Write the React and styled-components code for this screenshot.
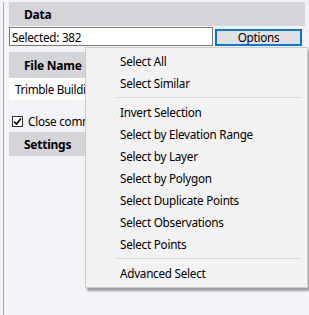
import React from 'react';
import styled, { createGlobalStyle } from 'styled-components';

const GlobalStyle = createGlobalStyle`
    html, body {
        margin: 0;
        padding: 0;
        background: #f3f3f7;
        font-family: "Segoe UI", "Noto Sans", "Liberation Sans", sans-serif;
        font-size: 11.7px;
        letter-spacing: -0.25px;
        color: #000;
    }
`;

const Page = styled.div`
    position: relative;
    width: 309px;
    height: 315px;
    overflow: hidden;
    box-sizing: border-box;
    padding: 2px 4px 0 3px;
`;

const Panel = styled.div`
    height: 100%;
    border-left: 1px solid #a9a9ae;
    padding-left: 5px;
    display: flex;
    flex-direction: column;
`;

const Header = styled.div`
    height: ${(p) => p.h || 24}px;
    background: #d4d4d9;
    font-weight: 700;
    font-size: 12px;
    display: flex;
    align-items: center;
    padding-left: 15px;
    margin-top: ${(p) => p.mt || 0}px;
`;

const Row = styled.div`
    display: flex;
    align-items: center;
    gap: 2px;
    margin-top: 1px;
`;

const TextBox = styled.div`
    width: 204px;
    height: 19px;
    box-sizing: border-box;
    border: 1px solid #7a7a7a;
    background: #fff;
    padding-left: 2px;
    display: flex;
    align-items: center;
    white-space: nowrap;
    overflow: hidden;
`;

const Button = styled.button`
    width: 87px;
    height: 17px;
    margin-top: 1px;
    box-sizing: border-box;
    border: 2px solid #0078d7;
    background: #e1e1e1;
    font-family: inherit;
    font-size: 11.7px;
    letter-spacing: -0.25px;
    padding: 0;
    line-height: 12px;
`;

const FileBox = styled.div`
    height: 22px;
    background: #fff;
    padding-left: 6px;
    display: flex;
    align-items: center;
    white-space: nowrap;
    letter-spacing: -0.35px;
`;

const CheckRow = styled.label`
    display: flex;
    align-items: center;
    gap: 5px;
    height: 20px;
    margin-top: 11px;
    padding-left: 3px;
    white-space: nowrap;
`;

const Box = styled.span`
    width: 11px;
    height: 11px;
    flex: none;
    box-sizing: border-box;
    border: 1px solid #333;
    background: #fff;
    display: flex;
    align-items: center;
    justify-content: center;
`;

const Menu = styled.div`
    position: absolute;
    left: 85px;
    top: 47px;
    width: 223px;
    box-sizing: border-box;
    background: #f2f2f2;
    border: 1px solid #cccccc;
    box-shadow: 2px 3px 2px rgba(0, 0, 0, 0.35);
    padding: 2px 0 3px;
`;

const Item = styled.div`
    height: 22px;
    display: flex;
    align-items: center;
    padding-left: 34px;
    white-space: nowrap;
`;

const Sep = styled.div`
    height: 1px;
    background: #d7d7d7;
    margin: 3px 6px 3px 30px;
`;

const menu = [
    'Select All',
    'Select Similar',
    '-',
    'Invert Selection',
    'Select by Elevation Range',
    'Select by Layer',
    'Select by Polygon',
    'Select Duplicate Points',
    'Select Observations',
    'Select Points',
    '-',
    'Advanced Select',
];

const App = () => {
    return (
        <>
            <GlobalStyle />
            <Page>
                <Panel>
                    <Header>Data</Header>
                    <Row>
                        <TextBox>Selected: 382</TextBox>
                        <Button>Options</Button>
                    </Row>
                    <Header h={26} mt={6}>File Name</Header>
                    <FileBox>Trimble Buildi</FileBox>
                    <CheckRow>
                        <Box>
                            <svg width="9" height="9" viewBox="0 0 9 9">
                                <path d="M1 4.5 L3.5 7 L8 1.5" stroke="#000" strokeWidth="1.6" fill="none" />
                            </svg>
                        </Box>
                        Close comm
                    </CheckRow>
                    <Header mt={1}>Settings</Header>
                </Panel>
                <Menu>
                    {menu.map((m, i) =>
                        m === '-' ? <Sep key={i} /> : <Item key={i}>{m}</Item>
                    )}
                </Menu>
            </Page>
        </>
    );
};

export default App;
